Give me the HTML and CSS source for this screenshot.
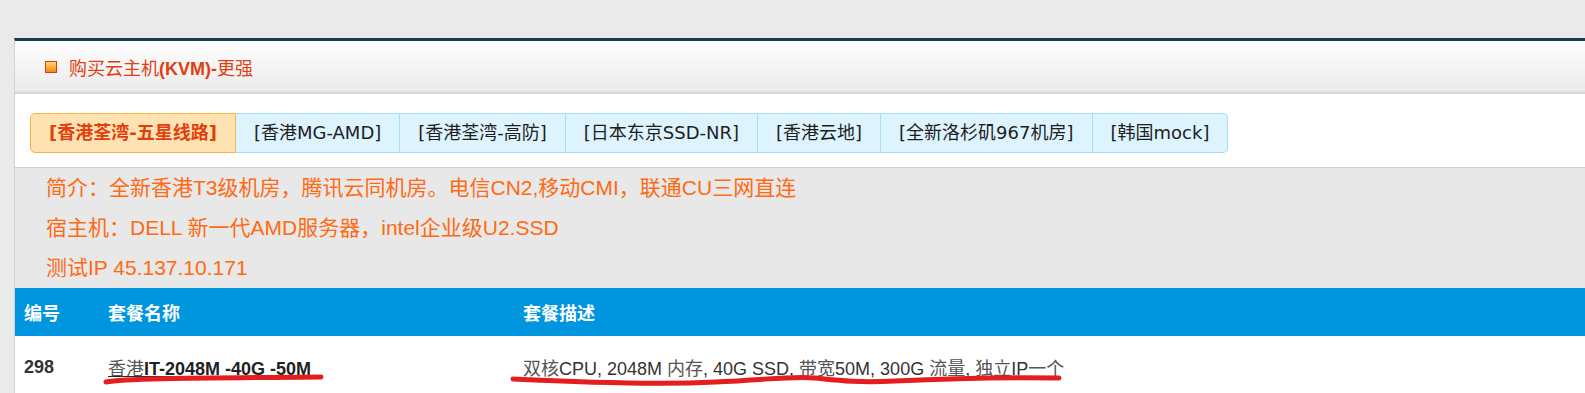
FILE: index.html
```html
<!DOCTYPE html>
<html lang="zh-cn">

<head>
    <meta charset="utf-8">
    <title>购买云主机(KVM)-更强</title>
    <link rel="stylesheet" href="styles.css">
</head>

<body>
    <div class="panel">
        <div class="panel-head">
            <span class="head-icon"></span>
            <h2 class="head-title"><span class="cjk">购买云主机</span>(KVM)-<span class="cjk">更强</span></h2>
        </div>

        <div class="tabs-area">
            <div class="tabs">
                <a class="tab active">[香港荃湾-五星线路]</a>
                <a class="tab">[香港MG-AMD]</a>
                <a class="tab">[香港荃湾-高防]</a>
                <a class="tab">[日本东京SSD-NR]</a>
                <a class="tab">[香港云地]</a>
                <a class="tab">[全新洛杉矶967机房]</a>
                <a class="tab">[韩国mock]</a>
            </div>
        </div>

        <div class="intro">
            <p>简介：全新香港T3级机房，腾讯云同机房。电信CN2,移动CMI，联通CU三网直连</p>
            <p>宿主机：DELL 新一代AMD服务器，intel企业级U2.SSD</p>
            <p>测试IP 45.137.10.171</p>
        </div>

        <div class="plans-wrap">
            <table class="plans">
                <thead>
                    <tr>
                        <th class="col-id">编号</th>
                        <th class="col-name">套餐名称</th>
                        <th>套餐描述</th>
                    </tr>
                </thead>
                <tbody>
                    <tr>
                        <td class="plan-id">298</td>
                        <td class="plan-name"><a><span class="cjk">香港</span>IT-2048M -40G -50M</a></td>
                        <td class="plan-desc"><span class="cjk">双核</span>CPU, 2048M <span class="cjk">内存</span>, 40G SSD, <span class="cjk">带宽</span>50M, 300G <span class="cjk">流量</span>, <span class="cjk">独立</span>IP<span class="cjk">一个</span></td>
                    </tr>
                </tbody>
            </table>

            <!-- marcas vermelhas feitas à mão por cima da linha -->
            <svg class="marks" width="1100" height="110" viewBox="0 0 1100 110">
                <path d="M91 94 C 110 90, 200 90, 306 89" />
                <path d="M498 91 C 560 94, 640 97, 700 94 S 780 88, 800 90 S 840 95, 880 93 S 990 89, 1044 90" />
            </svg>
        </div>
    </div>
</body>

</html>
```

FILE: styles.css
```css
body {
    margin: 0;
    background-color: #eaeaea;
    font-family: "Liberation Sans", "Noto Sans CJK SC", sans-serif;
}

.panel {
    margin: 38px 0 0 14px;
    border-top: 3px solid #143f52;
    border-left: 1px solid #d3d3d3;
    background-color: #fff;
}

.panel-head {
    height: 51px;
    display: flex;
    align-items: center;
    gap: 12px;
    padding-left: 30px;
    padding-top: 2px;
    box-sizing: border-box;
    background: linear-gradient(#fefefe, #ebebeb);
    border-bottom: 1px solid #e4e4e4;
}

.head-icon {
    width: 10px;
    height: 10px;
    border: 1px solid #d43f0e;
    background: linear-gradient(#ffd66e, #f28a12);
}

.head-title {
    margin: 0;
    font-size: 18px;
    font-weight: bold;
    color: #df3f12;
}

.cjk {
    font-weight: normal;
}

.tabs-area {
    border-top: 2px solid #d6d6d6;
    padding: 19px 15px 14px;
}

.tabs {
    display: flex;
}

.tab {
    padding: 0 18px;
    line-height: 38px;
    font-family: "DejaVu Sans", "Noto Sans CJK SC", sans-serif;
    font-size: 18px;
    color: #1e1e1e;
    background-color: #ddf3fd;
    border: 1px solid #a9dcf6;
    border-left: none;
    cursor: pointer;
}

.tab:first-child {
    border-left: 1px solid #a9dcf6;
    border-radius: 5px 0 0 5px;
}

.tab:last-child {
    border-radius: 0 5px 5px 0;
}

.tab.active {
    background-color: #ffe2b2;
    border-color: #f8b640;
    color: #e1400c;
    font-weight: bold;
}

.intro {
    background-color: #e8e8e8;
    border-top: 1px solid #cfcfcf;
    padding-left: 31px;
    font-size: 21px;
    line-height: 40px;
    color: #ff6a12;
}

.intro p {
    margin: 0;
}

.plans-wrap {
    position: relative;
}

.plans {
    width: 100%;
    border-collapse: collapse;
}

.plans th {
    height: 48px;
    padding: 0 9px;
    background-color: #0096df;
    color: #fff;
    font-size: 18px;
    font-weight: bold;
    text-align: left;
}

.col-id {
    width: 66px;
}

.col-name {
    width: 397px;
}

.plans td {
    height: 62px;
    padding: 0 9px;
    font-size: 18px;
    color: #333;
}

.plan-id {
    font-weight: bold;
    color: #222;
}

.plan-name a {
    font-weight: bold;
    color: #222;
    text-decoration: underline;
}

.plan-name .cjk,
.plan-desc .cjk {
    color: #555;
}

.marks {
    position: absolute;
    top: 0;
    left: 0;
    overflow: visible;
    pointer-events: none;
}

.marks path {
    fill: none;
    stroke: #e41d1f;
    stroke-width: 5;
    stroke-linecap: round;
}
```
